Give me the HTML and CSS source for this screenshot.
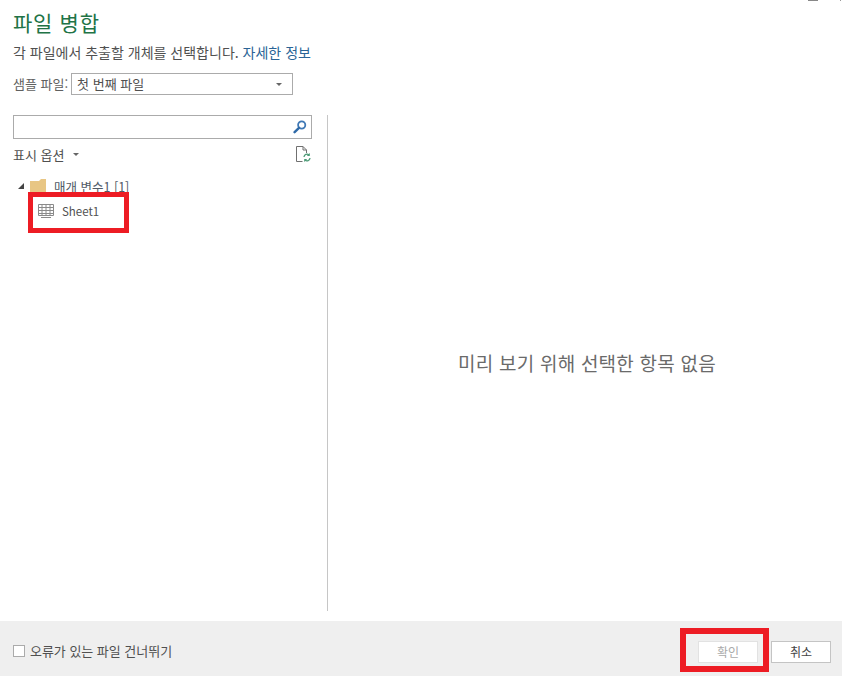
FILE: index.html
```html
<!DOCTYPE html>
<html lang="ko">
<head>
<meta charset="utf-8">
<title>파일 병합</title>
<link rel="stylesheet" href="styles.css">
</head>
<body>
<div class="dialog">
  <div class="window-scrap"><span class="scrap-line"></span><span class="scrap-dot"></span></div>
  <main class="content">
    <header class="head">
      <h1 class="title">파일 병합</h1>
      <p class="desc">각 파일에서 추출할 개체를 선택합니다. <a class="link">자세한 정보</a></p>
      <div class="sample">
        <span class="sample-label">샘플 파일:</span>
        <div class="select">
          <span class="select-value">첫 번째 파일</span>
          <span class="caret"></span>
        </div>
      </div>
    </header>
    <div class="panes">
      <section class="left">
        <div class="search">
          <svg class="search-icon" width="14" height="14" viewBox="0 0 14 14"><circle cx="8.7" cy="5" r="3.6" fill="none" stroke="#3f78b5" stroke-width="1.8"/><path d="M6 7.8 1.6 12.2" stroke="#2f6aa8" stroke-width="2.4" stroke-linecap="round"/></svg>
        </div>
        <div class="toolbar">
          <span class="options">표시 옵션<span class="caret options-caret"></span></span>
          <svg class="file-icon" width="18" height="18" viewBox="0 0 18 18"><path d="M8.5 16.5H2.5V1.5H9L12.5 5V8M9 1.5V5H12.5" fill="none" stroke="#707070"/><path d="M10 12a3 3 0 0 1 5-2M16 13a3 3 0 0 1-5 2" fill="none" stroke="#4c9a76" stroke-width="1.3"/><path d="M15.8 8v3h-3zM10.2 17v-3h3z" fill="#4c9a76"/></svg>
        </div>
        <ul class="tree">
          <li class="node folder-node">
            <span class="expander"></span>
            <svg class="folder" width="16" height="14" viewBox="0 0 16 14"><path d="M0 2H9L11 0H16V14H0Z" fill="#e8c684"/></svg>
            <span>매개 변수1 [1]</span>
          </li>
          <li class="node sheet-node">
            <svg class="sheet" width="16" height="14" viewBox="0 0 16 14"><path d="M.5.5h15v11H.5zM.5 3.5h15M.5 6.5h15M.5 9.5h15M4 .5v11M8 .5v11M12 .5v11M3 13.5h10" fill="none" stroke="#8a8a8a"/></svg>
            <span>Sheet1</span>
          </li>
        </ul>
        <span class="mark mark-sheet"></span>
      </section>
      <section class="preview">미리 보기 위해 선택한 항목 없음</section>
    </div>
  </main>
  <footer class="footer">
    <label class="skip"><span class="checkbox"></span>오류가 있는 파일 건너뛰기</label>
    <div class="actions">
      <button class="btn btn-disabled">확인</button>
      <button class="btn">취소</button>
      <span class="mark mark-ok"></span>
    </div>
  </footer>
</div>
</body>
</html>
```

FILE: styles.css
```css
* { box-sizing: border-box; }
html, body { margin: 0; padding: 0; }
body {
  background: #fff;
  font-family: "Noto Sans CJK KR", "Noto Sans", sans-serif;
  color: #444;
}
.dialog {
  position: relative;
  width: 842px;
  height: 676px;
  display: flex;
  flex-direction: column;
  overflow: hidden;
}
.window-scrap { position: absolute; top: 0; left: 0; right: 0; height: 1px; }
.scrap-line { position: absolute; left: 808px; top: 0; width: 10px; height: 1px; background: #888; }
.scrap-dot { position: absolute; left: 840px; top: 0; width: 1px; height: 1px; background: #999; }
.content { flex: 1; display: flex; flex-direction: column; min-height: 0; }
.head { padding: 8px 0 0 13px; height: 115px; }
.title {
  margin: 0;
  font-size: 21px;
  line-height: 28px;
  font-weight: 400;
  letter-spacing: 0.7px;
  color: #217346;
}
.desc {
  margin: 6px 0 0;
  font-size: 14px;
  line-height: 20px;
  color: #505050;
}
.link { color: #2a6496; }
.sample { display: flex; align-items: center; gap: 3px; margin-top: 11px; }
.sample-label { font-size: 13px; line-height: 22px; color: #606060; }
.select {
  width: 222px;
  height: 22px;
  border: 1px solid #ababab;
  padding: 0 10px 0 5px;
  display: flex;
  align-items: center;
  justify-content: space-between;
  font-size: 13px;
  color: #505050;
}
.select-value { padding-bottom: 1px; }
.caret {
  width: 0;
  height: 0;
  border-left: 3px solid transparent;
  border-right: 3px solid transparent;
  border-top: 3px solid #666;
}
.panes { flex: 1; display: flex; padding-bottom: 10px; min-height: 0; }
.left {
  position: relative;
  width: 328px;
  padding: 0 15px 0 13px;
  border-right: 1px solid #c6c6c6;
}
.search {
  height: 24px;
  border: 1px solid #ababab;
  display: flex;
  align-items: center;
  justify-content: flex-end;
  padding-right: 4px;
}
.toolbar {
  display: flex;
  align-items: center;
  justify-content: space-between;
  margin-top: 4px;
  height: 22px;
}
.options { font-size: 13px; color: #505050; display: flex; align-items: center; }
.options-caret { margin-left: 9px; }
.tree { list-style: none; margin: 10px 0 0; padding: 0 0 0 5px; }
.node { display: flex; align-items: center; font-size: 12.5px; height: 22px; }
.folder-node { color: #505a66; height: 22px; }
.expander {
  width: 0;
  height: 0;
  margin-right: 6px;
  border-bottom: 6px solid #444;
  border-left: 6px solid transparent;
}
.folder { margin-right: 8px; }
.sheet-node { padding-left: 20px; height: 28px; color: #505050; }
.sheet-node span { font-size: 11.5px; }
.sheet { margin-right: 8px; }
.mark { position: absolute; border-style: solid; border-color: #ed1c24; pointer-events: none; }
.mark-sheet { left: 28px; top: 77px; width: 101px; height: 41px; border-width: 5px; }
.preview {
  flex: 1;
  display: flex;
  align-items: center;
  justify-content: center;
  padding: 0 0 2px 4px;
  font-size: 19px;
  letter-spacing: 0.22px;
  color: #6a6a6a;
}
.footer {
  height: 55px;
  background: #efefef;
  display: flex;
  align-items: flex-start;
  justify-content: space-between;
  padding: 20px 11px 0 13px;
}
.skip { display: flex; align-items: center; height: 18px; font-size: 13px; letter-spacing: -0.03px; color: #505050; }
.checkbox {
  width: 12px;
  height: 12px;
  margin-top: 2px;
  background: #fff;
  border: 1px solid #ababab;
  margin-right: 5px;
}
.actions { position: relative; display: flex; gap: 13px; }
.btn {
  width: 60px;
  height: 22px;
  background: #fff;
  border: 1px solid #c4c4c4;
  padding: 0 0 2px;
  font: inherit;
  font-size: 12px;
  color: #444;
}
.btn-disabled { border-color: #e2e2e2; color: #aaa; }
.mark-ok { left: -18px; top: -13px; width: 89px; height: 44px; border-width: 6px; }
```
